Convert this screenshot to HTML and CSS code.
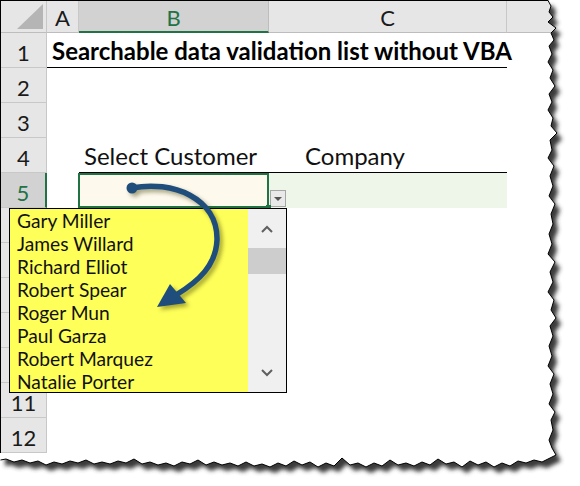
FILE: index.html
```html
<!DOCTYPE html>
<html>
<head>
<meta charset="utf-8">
<link rel="stylesheet" href="styles.css">
</head>
<body>
<div class="page">
  <div class="sheet">
    <div class="corner"><span class="corner-tri"></span></div>
    <div class="colhead">A</div>
    <div class="colhead colhead-sel">B</div>
    <div class="colhead">C</div>
    <div class="colhead colhead-last"></div>

    <div class="rowhead">1</div>
    <div class="cell cell-title">Searchable data validation list without VBA</div>
    <div class="cell"></div>

    <div class="rowhead">2</div>
    <div class="cell"></div><div class="cell"></div><div class="cell"></div><div class="cell"></div>

    <div class="rowhead">3</div>
    <div class="cell"></div><div class="cell"></div><div class="cell"></div><div class="cell"></div>

    <div class="rowhead">4</div>
    <div class="cell"></div>
    <div class="cell cell-label cell-under">Select Customer</div>
    <div class="cell cell-label cell-under cell-company">Company</div>
    <div class="cell"></div>

    <div class="rowhead rowhead-sel">5</div>
    <div class="cell"></div>
    <div class="cell cell-input">
      <span class="dd-btn"><span class="dd-tri"></span></span>
      <span class="fill-handle"></span>
    </div>
    <div class="cell cell-output"></div>
    <div class="cell"></div>

    <div class="rowhead"></div>
    <div class="cell"></div><div class="cell"></div><div class="cell"></div><div class="cell"></div>
    <div class="rowhead"></div>
    <div class="cell"></div><div class="cell"></div><div class="cell"></div><div class="cell"></div>
    <div class="rowhead"></div>
    <div class="cell"></div><div class="cell"></div><div class="cell"></div><div class="cell"></div>
    <div class="rowhead"></div>
    <div class="cell"></div><div class="cell"></div><div class="cell"></div><div class="cell"></div>
    <div class="rowhead"></div>
    <div class="cell"></div><div class="cell"></div><div class="cell"></div><div class="cell"></div>
    <div class="rowhead">11</div>
    <div class="cell"></div><div class="cell"></div><div class="cell"></div><div class="cell"></div>
    <div class="rowhead">12</div>
    <div class="cell"></div><div class="cell"></div><div class="cell"></div><div class="cell"></div>
  </div>

  <div class="dropdown">
    <ul class="dd-items">
      <li>Gary Miller</li>
      <li>James Willard</li>
      <li>Richard Elliot</li>
      <li>Robert Spear</li>
      <li>Roger Mun</li>
      <li>Paul Garza</li>
      <li>Robert Marquez</li>
      <li>Natalie Porter</li>
    </ul>
    <div class="scrollbar">
      <div class="sb-btn">
        <svg width="12" height="8" viewBox="0 0 12 8"><polyline points="1,7 6,2 11,7" fill="none" stroke="#606060" stroke-width="2"/></svg>
      </div>
      <div class="sb-track"><div class="sb-thumb"></div></div>
      <div class="sb-btn">
        <svg width="12" height="8" viewBox="0 0 12 8"><polyline points="1,1 6,6 11,1" fill="none" stroke="#606060" stroke-width="2"/></svg>
      </div>
    </div>
  </div>

  <svg class="arrow" width="580" height="486" viewBox="0 0 580 486">
    <g>
      <path d="M132,188 C172,180 218,198 217,240 C216,265 199,281 176,295" fill="none" stroke="#1f4e7c" stroke-width="5.5" stroke-linecap="round"/>
      <circle cx="132" cy="188" r="5.5" fill="#1f4e7c"/>
      <polygon points="157,307 170,284 186,303" fill="#1f4e7c"/>
    </g>
  </svg>

  <svg class="torn" width="580" height="486" viewBox="0 0 580 486">
    <defs>
      <filter id="blur" x="-20%" y="-20%" width="140%" height="140%"><feGaussianBlur stdDeviation="2.2"/></filter>
      <clipPath id="outside">
        <path clip-rule="evenodd" d="M-10,-10 H600 V500 H-10 Z M0,0 L548,0 L551,6 L549,12 L553,17 L548,22 L556,28 L551,33 L554,40 L549,46 L552,54 L548,62 L553,70 L550,78 L555,86 L549,94 L552,102 L548,110 L553,118 L551,126 L557,133 L550,140 L552,150 L548,158 L554,166 L550,176 L553,186 L549,196 L555,204 L551,214 L553,224 L549,234 L552,244 L548,254 L555,262 L550,272 L553,282 L548,292 L554,300 L551,310 L556,318 L550,326 L553,336 L549,346 L552,356 L548,366 L554,374 L550,384 L553,394 L549,404 L555,412 L551,420 L553,430 L549,440 L552,448 L556,455 L550,458 L542,462 L534,460 L526,463 L518,461 L510,466 L502,463 L494,467 L486,462 L478,465 L470,461 L462,467 L454,462 L446,464 L438,459 L430,465 L422,462 L414,466 L406,463 L398,465 L390,460 L382,466 L374,463 L366,467 L358,463 L350,465 L342,458 L334,466 L326,463 L318,467 L310,462 L302,465 L294,461 L286,466 L278,463 L270,467 L262,464 L254,466 L246,462 L238,466 L230,463 L222,465 L214,462 L206,465 L198,460 L190,464 L182,462 L174,466 L166,463 L158,465 L150,462 L142,464 L134,459 L126,463 L118,461 L110,464 L102,462 L94,464 L86,460 L78,463 L70,461 L62,464 L54,462 L46,465 L38,461 L30,463 L22,460 L14,462 L6,459 L0,460 Z"/>
      </clipPath>
    </defs>
    <path fill="#fff" fill-rule="evenodd" d="M-10,-10 H600 V500 H-10 Z M0,0 L548,0 L551,6 L549,12 L553,17 L548,22 L556,28 L551,33 L554,40 L549,46 L552,54 L548,62 L553,70 L550,78 L555,86 L549,94 L552,102 L548,110 L553,118 L551,126 L557,133 L550,140 L552,150 L548,158 L554,166 L550,176 L553,186 L549,196 L555,204 L551,214 L553,224 L549,234 L552,244 L548,254 L555,262 L550,272 L553,282 L548,292 L554,300 L551,310 L556,318 L550,326 L553,336 L549,346 L552,356 L548,366 L554,374 L550,384 L553,394 L549,404 L555,412 L551,420 L553,430 L549,440 L552,448 L556,455 L550,458 L542,462 L534,460 L526,463 L518,461 L510,466 L502,463 L494,467 L486,462 L478,465 L470,461 L462,467 L454,462 L446,464 L438,459 L430,465 L422,462 L414,466 L406,463 L398,465 L390,460 L382,466 L374,463 L366,467 L358,463 L350,465 L342,458 L334,466 L326,463 L318,467 L310,462 L302,465 L294,461 L286,466 L278,463 L270,467 L262,464 L254,466 L246,462 L238,466 L230,463 L222,465 L214,462 L206,465 L198,460 L190,464 L182,462 L174,466 L166,463 L158,465 L150,462 L142,464 L134,459 L126,463 L118,461 L110,464 L102,462 L94,464 L86,460 L78,463 L70,461 L62,464 L54,462 L46,465 L38,461 L30,463 L22,460 L14,462 L6,459 L0,460 Z"/>
    <g clip-path="url(#outside)">
      <path transform="translate(5,6)" fill="#3a3a3a" filter="url(#blur)" d="M0,0 L548,0 L551,6 L549,12 L553,17 L548,22 L556,28 L551,33 L554,40 L549,46 L552,54 L548,62 L553,70 L550,78 L555,86 L549,94 L552,102 L548,110 L553,118 L551,126 L557,133 L550,140 L552,150 L548,158 L554,166 L550,176 L553,186 L549,196 L555,204 L551,214 L553,224 L549,234 L552,244 L548,254 L555,262 L550,272 L553,282 L548,292 L554,300 L551,310 L556,318 L550,326 L553,336 L549,346 L552,356 L548,366 L554,374 L550,384 L553,394 L549,404 L555,412 L551,420 L553,430 L549,440 L552,448 L556,455 L550,458 L542,462 L534,460 L526,463 L518,461 L510,466 L502,463 L494,467 L486,462 L478,465 L470,461 L462,467 L454,462 L446,464 L438,459 L430,465 L422,462 L414,466 L406,463 L398,465 L390,460 L382,466 L374,463 L366,467 L358,463 L350,465 L342,458 L334,466 L326,463 L318,467 L310,462 L302,465 L294,461 L286,466 L278,463 L270,467 L262,464 L254,466 L246,462 L238,466 L230,463 L222,465 L214,462 L206,465 L198,460 L190,464 L182,462 L174,466 L166,463 L158,465 L150,462 L142,464 L134,459 L126,463 L118,461 L110,464 L102,462 L94,464 L86,460 L78,463 L70,461 L62,464 L54,462 L46,465 L38,461 L30,463 L22,460 L14,462 L6,459 L0,460 Z"/>
    </g>
    <path fill="none" stroke="#000" stroke-width="1" d="M548,0.5 L551,6 L549,12 L553,17 L548,22 L556,28 L551,33 L554,40 L549,46 L552,54 L548,62 L553,70 L550,78 L555,86 L549,94 L552,102 L548,110 L553,118 L551,126 L557,133 L550,140 L552,150 L548,158 L554,166 L550,176 L553,186 L549,196 L555,204 L551,214 L553,224 L549,234 L552,244 L548,254 L555,262 L550,272 L553,282 L548,292 L554,300 L551,310 L556,318 L550,326 L553,336 L549,346 L552,356 L548,366 L554,374 L550,384 L553,394 L549,404 L555,412 L551,420 L553,430 L549,440 L552,448 L556,455 L550,458 L542,462 L534,460 L526,463 L518,461 L510,466 L502,463 L494,467 L486,462 L478,465 L470,461 L462,467 L454,462 L446,464 L438,459 L430,465 L422,462 L414,466 L406,463 L398,465 L390,460 L382,466 L374,463 L366,467 L358,463 L350,465 L342,458 L334,466 L326,463 L318,467 L310,462 L302,465 L294,461 L286,466 L278,463 L270,467 L262,464 L254,466 L246,462 L238,466 L230,463 L222,465 L214,462 L206,465 L198,460 L190,464 L182,462 L174,466 L166,463 L158,465 L150,462 L142,464 L134,459 L126,463 L118,461 L110,464 L102,462 L94,464 L86,460 L78,463 L70,461 L62,464 L54,462 L46,465 L38,461 L30,463 L22,460 L14,462 L6,459 L0.5,460"/>
  </svg>
</div>
</body>
</html>
```

FILE: styles.css
```css
* { box-sizing: border-box; }
html, body { margin: 0; padding: 0; background: #fff; }
body {
  width: 580px;
  height: 486px;
  overflow: hidden;
  font-family: Lato, "Noto Sans", sans-serif;
  color: #111;
}
.page {
  position: relative;
  width: 580px;
  height: 486px;
}
.sheet {
  display: grid;
  grid-template-columns: 46px 32px 190px 238px 1fr;
  grid-template-rows: 32px repeat(12, 35px);
  border-left: 1px solid #000;
  border-top: 1px solid #000;
  background: #fff;
}
.corner {
  position: relative;
  background: #e6e6e6;
  border-right: 1px solid #c8c8c8;
  border-bottom: 1px solid #bdbdbd;
}
.corner-tri {
  position: absolute;
  right: 3px;
  bottom: 3px;
  width: 0;
  height: 0;
  border-left: 26px solid transparent;
  border-bottom: 25px solid #b5b5b5;
}
.colhead {
  background: #e6e6e6;
  border-right: 1px solid #c8c8c8;
  border-bottom: 1px solid #bdbdbd;
  display: flex;
  align-items: center;
  justify-content: center;
  font-size: 22px;
  color: #1a1a1a;
  padding-top: 2px;
}
.colhead-sel {
  background: #d2d2d2;
  color: #217346;
  border-bottom: 2px solid #217346;
  border-right-color: #bdbdbd;
}
.colhead-last { border-right: none; }
.rowhead {
  background: #e6e6e6;
  border-right: 1px solid #c8c8c8;
  border-bottom: 1px solid #c8c8c8;
  display: flex;
  align-items: center;
  justify-content: center;
  font-size: 22px;
  color: #1a1a1a;
  padding-top: 4px;
}
.rowhead-sel {
  background: #d2d2d2;
  color: #217346;
  border-right: 2px solid #217346;
}
.cell {
  display: flex;
  align-items: flex-end;
  white-space: nowrap;
  min-width: 0;
}
.cell-title {
  grid-column: 2 / span 3;
  border-bottom: 1px solid #000;
  font-weight: 700;
  font-size: 24px;
  line-height: 28px;
  padding-left: 5px;
  padding-bottom: 2px;
  color: #000;
}
.cell-label {
  font-size: 24px;
  line-height: 28px;
  padding-left: 5px;
  padding-bottom: 2px;
  color: #111;
}
.cell-company { padding-left: 36px; }
.cell-under { border-bottom: 1px solid #000; }
.cell-input {
  position: relative;
  background: #fdf9ec;
  box-shadow: inset 0 0 0 2px #217346;
  margin-left: -1px;
}
.cell-output { background: #eef6e9; }
.dd-btn {
  position: absolute;
  right: -17px;
  bottom: 1px;
  width: 16px;
  height: 17px;
  background: #e9e9ea;
  border: 1px solid #a6a6a6;
  display: flex;
  align-items: center;
  justify-content: center;
}
.dd-tri {
  width: 0;
  height: 0;
  border-left: 4px solid transparent;
  border-right: 4px solid transparent;
  border-top: 4px solid #555;
}
.fill-handle {
  position: absolute;
  right: -2px;
  bottom: -2px;
  width: 5px;
  height: 5px;
  background: #217346;
}
.dropdown {
  position: absolute;
  left: 9px;
  top: 208px;
  width: 278px;
  height: 185px;
  border: 1px solid #000;
  display: flex;
  background: #fff;
}
.dd-items {
  list-style: none;
  margin: 0;
  padding: 0 0 0 7px;
  width: 238px;
  background: #ffff5a;
  font-size: 19.2px;
  color: #111;
}
.dd-items li {
  height: 23px;
  line-height: 23px;
  white-space: nowrap;
}
.scrollbar {
  flex: 1;
  background: #f0f0f0;
  display: flex;
  flex-direction: column;
}
.sb-btn {
  height: 39px;
  display: flex;
  align-items: center;
  justify-content: center;
}
.sb-track { flex: 1; }
.sb-thumb {
  height: 26px;
  background: #cdcdcd;
}
.arrow {
  position: absolute;
  left: 0;
  top: 0;
  pointer-events: none;
  filter: drop-shadow(3px 3px 2px rgba(60, 60, 0, 0.45));
}
.torn {
  position: absolute;
  left: 0;
  top: 0;
  pointer-events: none;
}
```
